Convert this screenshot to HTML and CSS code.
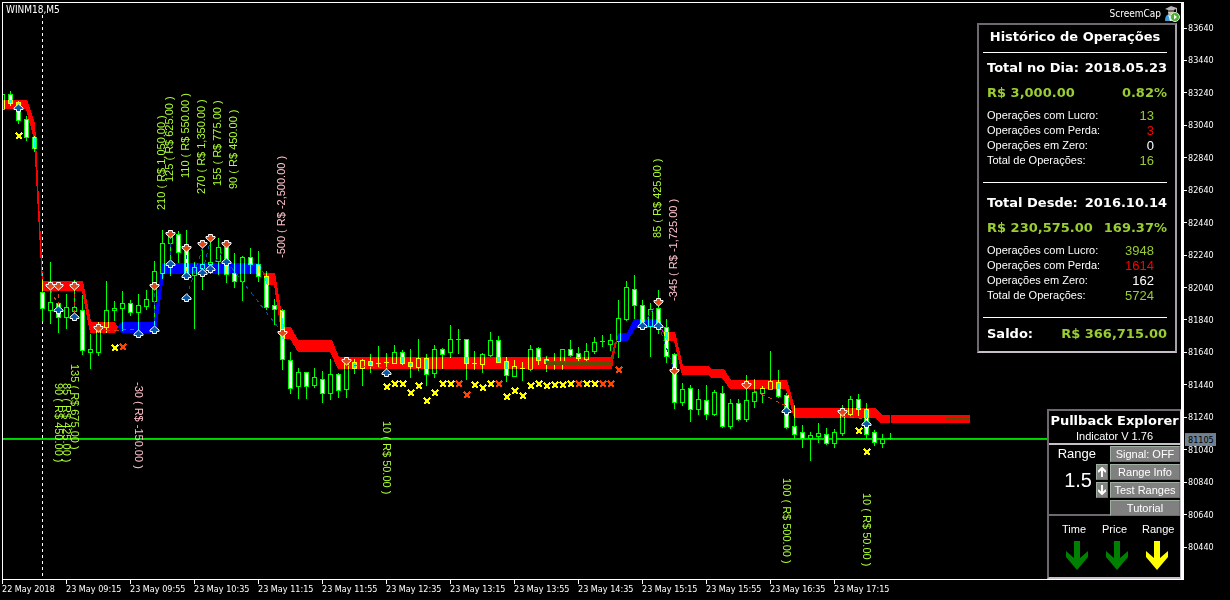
FILE: index.html
```html
<!DOCTYPE html>
<html lang="pt-BR">
<head>
<meta charset="utf-8">
<title>WINM18,M5</title>
<link rel="stylesheet" href="styles.css">
</head>
<body>
<div class="terminal">
  <main class="chart">
    <svg class="plot" id="plot" role="img" aria-label="WINM18 M5">
      <line class="day-line" x1="39.5" y1="12" x2="39.5" y2="100%"/>
      <rect class="price-line" x="0" y="435" width="100%" height="1"/>
      <rect class="price-shadow" x="0" y="436" width="100%" height="1"/>
      <g id="scene" transform="translate(-3 -3)">
        <g id="candles"></g>
        <g class="bands">
          <polygon class="red" points="3,100 27,100 35,123 37,160 43,281 83,281 91,322 115,322 118,327 115,333 90,333 82,291 42,291 42,285 34,140 26,109 3,109"/>
          <polygon class="blue" points="118,327 121,322 154,322 162,263 258,263 262,268 258,274 164,274 156,333 121,333"/>
          <polygon class="red" points="261,268 264,273 275,273 284,327 291,327 298,340 332,340 339,357 611,357 615,341 616,343 612,369 338,369 330,352 298,352 290,339 282,339 274,285 267,285"/>
          <polygon class="blue" points="616,343 618,333 627,333 634,319 660,319 663,331 659,328 635,328 628,341 618,341"/>
          <polygon class="red" points="661,329 664,332 675,332 683,366 708,366 712,369 724,369 731,380 787,380 795,408 875,408 882,415 890,415 890,423 881,423 875,418 794,418 786,389 730,389 722,378 712,378 708,375 682,375 674,341 667,341"/>
          <rect class="red" x="891" y="415" width="79" height="8"/>
        </g>
        <rect class="olive" x="546" y="361" width="65" height="4"/>
        <path class="olive-line" d="M611 363L618 336"/>
        <rect class="olive" x="946" y="418" width="24" height="2"/>
        <g id="trades"></g>
        <g id="marks"></g>
        <g id="labels"></g>
      </g>
    </svg>
    <h1 class="symbol">WINM18,M5</h1>
    <aside class="side">
      <div class="expert">
        <span>ScreemCap</span>
        <svg width="16" height="16" viewBox="0 0 16 16" aria-hidden="true">
          <path d="M1 15Q1 8 6 8Q11 8 12 15Z" fill="#3f9fe0"/>
          <path d="M4 8L7 11L8 15L6 15Z" fill="#eef6ff"/>
          <circle cx="7" cy="6" r="3" fill="#d8c8a8"/>
          <path d="M1 3L7 0L13 2L13 6L12 6L12 3L10 4L10 6L4 6L4 4Z" fill="#b4b4b4"/>
          <path d="M4 4L10 4L10 6L4 6Z" fill="#666"/>
          <circle cx="11" cy="11" r="4.500" fill="#4caf32" stroke="#d8f0d0" stroke-width="1"/>
          <path d="M10 8.500L13 11L10 13.500Z" fill="#fff"/>
        </svg>
      </div>
      <section class="history">
        <h2 class="history-title">Histórico de Operações</h2>
        <div class="block">
          <div class="pair"><span>Total no Dia:</span><span>2018.05.23</span></div>
          <div class="pair gain"><span>R$ 3,000.00</span><span>0.82%</span></div>
          <dl class="stats">
            <div><dt>Operações com Lucro:</dt><dd class="gain">13</dd></div>
            <div><dt>Operações com Perda:</dt><dd class="loss">3</dd></div>
            <div><dt>Operações em Zero:</dt><dd>0</dd></div>
            <div><dt>Total de Operações:</dt><dd class="gain">16</dd></div>
          </dl>
        </div>
        <div class="block">
          <div class="pair"><span>Total Desde:</span><span>2016.10.14</span></div>
          <div class="pair gain"><span>R$ 230,575.00</span><span>169.37%</span></div>
          <dl class="stats">
            <div><dt>Operações com Lucro:</dt><dd class="gain">3948</dd></div>
            <div><dt>Operações com Perda:</dt><dd class="loss">1614</dd></div>
            <div><dt>Operações em Zero:</dt><dd>162</dd></div>
            <div><dt>Total de Operações:</dt><dd class="gain">5724</dd></div>
          </dl>
        </div>
        <div class="pair balance"><span>Saldo:</span><span class="gain">R$ 366,715.00</span></div>
      </section>
      <section class="explorer">
        <header class="explorer-head">
          <h2>Pullback Explorer</h2>
          <p>Indicator V 1.76</p>
        </header>
        <div class="controls">
          <div class="range"><span>Range</span><output>1.5</output></div>
          <div class="spin">
            <button type="button" aria-label="Range up"><svg width="8" height="10" viewBox="0 0 8 10"><path d="M4 10V2M0 5L4 1L8 5"/></svg></button>
            <button type="button" aria-label="Range down"><svg width="8" height="10" viewBox="0 0 8 10"><path d="M4 0V8M0 5L4 9L8 5"/></svg></button>
          </div>
          <div class="actions">
            <button type="button">Signal: OFF</button>
            <button type="button">Range Info</button>
            <button type="button">Test Ranges</button>
            <button type="button">Tutorial</button>
          </div>
        </div>
        <div class="signals">
          <div><span>Time</span><svg class="go" width="22" height="29" viewBox="0 0 22 29"><path d="M8 0H14V17L22 10V16L11 29L0 16V10L8 17Z"/></svg></div>
          <div><span>Price</span><svg class="go" width="22" height="29" viewBox="0 0 22 29"><path d="M8 0H14V17L22 10V16L11 29L0 16V10L8 17Z"/></svg></div>
          <div><span>Range</span><svg class="wait" width="22" height="29" viewBox="0 0 22 29"><path d="M8 0H14V17L22 10V16L11 29L0 16V10L8 17Z"/></svg></div>
        </div>
      </section>
    </aside>
  </main>
  <div class="prices">
    <span>83640</span><span>83440</span><span>83240</span><span>83040</span><span>82840</span><span>82640</span><span>82440</span><span>82240</span><span>82040</span><span>81840</span><span>81640</span><span>81440</span><span>81240</span><span>81040</span><span>80840</span><span>80640</span><span>80440</span>
    <strong class="last-price">81105</strong>
  </div>
  <div class="times">
    <span>22 May 2018</span><span>23 May 09:15</span><span>23 May 09:55</span><span>23 May 10:35</span><span>23 May 11:15</span><span>23 May 11:55</span><span>23 May 12:35</span><span>23 May 13:15</span><span>23 May 13:55</span><span>23 May 14:35</span><span>23 May 15:15</span><span>23 May 15:55</span><span>23 May 16:35</span><span>23 May 17:15</span>
  </div>
</div>
<script src="chart.js"></script>
</body>
</html>
```

FILE: styles.css
```css
* { box-sizing: border-box; }
body {
  margin: 0;
  background: #000;
  color: #fff;
  font-family: "Liberation Sans", Arial, sans-serif;
  font-size: 11px;
}
h1, h2, p, dl, dd { margin: 0; font-weight: normal; }

.terminal {
  display: grid;
  grid-template-columns: 1fr 46px;
  grid-template-rows: 1fr 20px;
  height: 100vh;
  min-height: 600px;
  padding: 2px 0 0 2px;
}
.chart {
  position: relative;
  overflow: hidden;
  border: 1px solid #fff;
  border-right-width: 3px;
}
.symbol, .expert, .prices, .times {
  font-family: "DejaVu Sans Condensed", "DejaVu Sans", sans-serif;
  font-size: 10px;
  line-height: 12px;
}
.prices, .times { font-size: 9px; }
.symbol { position: absolute; left: 3px; top: 1px; }

/* plot */
.plot { position: absolute; left: 0; top: 0; width: 100%; height: 100%; shape-rendering: crispEdges; }
.day-line { stroke: #fff; stroke-dasharray: 3 3; }
.price-line { fill: #00d800; }
.price-shadow { fill: #4c8c6c; }
.candle { fill: #000; stroke: #0f0; }
.candle.full { fill: #fff; }
.wick { fill: #0f0; }
.bands > * { mix-blend-mode: difference; }
.red { fill: #f00; }
.blue { fill: #00f; }
.olive { fill: #5c5000; }
.olive-line { stroke: #5c5000; stroke-width: 1; fill: none; }
.trade { fill: none; stroke-dasharray: 4 4; }
.trade.buy { stroke: #0850a0; }
.trade.sell { stroke: #d04010; }
.arrow { stroke: #fff; stroke-width: 1; shape-rendering: auto; }
.arrow.buy { fill: #0858a8; }
.arrow.sell { fill: #e04818; }
.cross { stroke-width: 2; fill: none; }
.cross.hit { stroke: #ff0; }
.cross.miss { stroke: #ff4500; }
.profit, .deficit { font-size: 11px; }
.profit { fill: #adff2f; }
.deficit { fill: #ffc0cb; }

/* overlays on the right of the plot */
.side {
  position: absolute;
  inset: 0 0 0 auto;
  display: flex;
  flex-direction: column;
  align-items: flex-end;
}
.expert { display: flex; align-items: center; gap: 3px; height: 20px; padding: 2px 1px 0 0; }
.gain { color: #9acd32; }
.loss { color: #f00; }

.history {
  width: 200px;
  margin-right: 4px;
  padding: 0 8px 0 4px;
  background: #000;
  border: 2px solid;
  border-color: #706870 #a8a0a8 #c8c0c8 #706870;
}
.history-title, .pair, .explorer h2 {
  font-family: "DejaVu Sans", Verdana, sans-serif;
  font-weight: bold;
  font-size: 13px;
  line-height: 16px;
  white-space: nowrap;
}
.history-title { padding: 4px 0 7px; text-align: center; }
.block { border-top: 1px solid #fff; padding: 7px 0 14px; }
.pair { display: flex; justify-content: space-between; padding-left: 4px; }
.pair + .pair { margin-top: 9px; }
.stats { padding: 7px 13px 0 4px; line-height: 15px; }
.stats dd { font-size: 13px; }
.block + .block { padding-top: 12px; }
.stats > div { display: flex; justify-content: space-between; height: 15px; }
.balance { border-top: 1px solid #fff; padding-top: 8px; padding-bottom: 9px; }

.explorer {
  width: 134px;
  margin-top: auto;
  background: #000;
  border: 2px solid;
  border-color: #706870 #c8c0c8 #c8c0c8 #706870;
  border-right-width: 1px;
}
.explorer-head { height: 34px; padding-top: 2px; text-align: center; border-bottom: 2px solid #c8c0c8; }
.explorer-head p { line-height: 14px; }
.controls { display: flex; height: 71px; border-bottom: 2px solid #706870; }
.range { flex: 1; display: flex; flex-direction: column; align-items: flex-end; }
.range span { font-size: 13px; line-height: 18px; }
.range output { font-size: 20px; line-height: 34px; padding-right: 4px; }
.spin { width: 12px; padding-top: 19px; display: grid; gap: 2px; align-content: start; }
.actions { width: 70px; margin-left: 2px; padding-top: 1px; display: grid; gap: 2px; align-content: start; }
button {
  height: 16px;
  padding: 0;
  border: 1px solid;
  border-color: #a0b0a0 #706870 #706870 #a0b0a0;
  background: #808080;
  color: #fff;
  font: 11px/14px "Liberation Sans", Arial, sans-serif;
}
button svg { display: block; margin: auto; }
button path { fill: none; stroke: #fff; stroke-width: 2; }
.signals { display: grid; grid-template-columns: repeat(3, 40px); padding: 6px 0 7px 13px; }
.signals span { display: block; line-height: 14px; }
.signals svg { display: block; margin: 5px 0 0 4px; }
.go { fill: #008000; }
.wait { fill: #ff0; }

/* axes */
.prices { position: relative; display: flex; flex-direction: column; justify-content: space-between; padding: 20px 0 27px; }
.prices span { display: flex; align-items: center; gap: 1px; }
.prices span::before { content: ""; width: 3px; height: 1px; background: #fff; }
.last-price {
  position: absolute;
  left: 1px;
  top: 431px;
  width: 31px;
  padding-left: 3px;
  background: #708090;
  border-top: 1px solid #00c800;
  color: #000;
  font-weight: normal;
}
.times { display: flex; grid-column: 1 / -1; }
.times span { width: 64px; flex: none; padding-top: 3px; white-space: nowrap; position: relative; }
.times span::before { content: ""; position: absolute; left: 0; top: 0; width: 1px; height: 4px; background: #fff; }
```

FILE: chart.js
```js
// Bars are 8px apart. Each row: high, body top, body bottom, low, filled.
const bars = [
  [94,94,109,109,0],[91,94,103,105,1],[101,102,120,123,1],[116,119,137,140,1],[136,137,148,151,1],
  [280,292,308,320,1],[262,302,310,323,0],[302,303,317,332,1],[294,307,317,328,0],[280,307,311,313,0],
  [295,310,350,354,1],[334,349,352,368,0],[322,328,352,355,0],[281,310,327,332,0],[301,308,310,320,0],
  [291,303,308,330,0],[300,303,312,315,1],[294,305,312,330,0],[290,299,306,309,0],[261,271,301,327,0],
  [230,243,273,278,0],[232,234,243,275,0],[231,234,252,262,1],[230,248,275,277,1],[262,267,275,328,0],
  [245,264,268,289,0],[237,262,264,273,0],[238,247,261,274,0],[243,247,274,282,1],[253,273,281,287,1],
  [256,257,281,300,0],[248,257,264,273,1],[251,264,276,281,1],[271,276,307,309,1],[299,305,309,324,1],
  [309,310,359,369,1],[352,360,388,393,1],[368,372,386,398,0],[372,372,386,398,1],[368,377,385,387,0],
  [371,379,393,402,1],[359,374,393,399,0],[373,374,390,397,1],[358,363,389,397,0],[359,362,368,373,1],
  [359,360,368,385,0],[354,361,365,372,1],[346,363,364,366,0],[353,362,363,370,0],[345,352,363,363,0],
  [350,352,363,364,1],[349,362,366,377,1],[339,358,367,370,0],[354,358,374,385,1],[345,349,373,377,0],
  [348,349,354,368,1],[325,339,352,357,0],[329,339,340,353,0],[339,339,363,379,1],[351,363,364,369,0],
  [353,354,364,372,0],[332,340,355,356,0],[336,340,362,362,1],[357,361,375,381,1],[360,366,376,376,0],
  [362,368,369,380,0],[345,349,369,370,0],[347,348,360,364,1],[356,359,363,371,1],[353,363,364,369,0],
  [349,349,364,369,0],[340,349,355,356,1],[347,353,358,363,1],[343,351,359,363,0],[337,342,351,353,0],
  [335,341,342,346,0],[334,340,344,350,0],[300,318,341,357,0],[281,287,319,320,0],[275,289,305,318,1],
  [300,305,323,327,1],[303,309,326,356,0],[290,308,325,333,1],[319,327,356,362,1],[353,354,402,408,1],
  [383,389,402,405,0],[385,388,409,421,1],[389,399,409,414,0],[385,400,414,419,1],[390,392,414,415,0],
  [386,393,426,427,1],[399,403,426,428,0],[399,403,419,420,1],[375,400,419,421,0],[379,392,401,407,0],
  [386,388,393,402,0],[351,381,389,389,0],[370,382,396,397,1],[393,395,427,428,1],[405,426,434,438,1],
  [425,432,438,447,1],[432,435,438,460,0],[423,433,436,442,0],[428,434,443,444,1],[429,432,443,447,0],
  [405,412,433,435,0],[396,399,414,417,0],[394,399,409,415,1],[403,409,434,438,1],[430,432,442,445,1],
  [434,439,443,447,0],[433,438,439,439,0]
];

const down = [[50,286],[58,286],[74,286],[98,328],[154,286],[170,234],[186,248],[202,244],[210,238],
  [226,244],[282,333],[346,361],[658,302],[674,371],[746,385],[842,412]];
const up = [[18,107],[58,309],[74,316],[138,333],[154,329],[170,263],[186,275],[186,297],[202,272],
  [210,268],[226,261],[386,372],[642,325],[658,325],[786,410],[866,423]];

const trades = [
  ["sell",50,290,58,305],["sell",58,286,58,309],["sell",74,286,74,316],["sell",98,331,138,329],
  ["buy",154,329,154,286],["buy",170,263,170,234],["buy",186,275,186,248],["buy",186,297,202,248],
  ["buy",202,272,210,240],["buy",210,268,226,246],["buy",226,261,282,333],["sell",346,365,386,368],
  ["buy",642,325,658,302],["buy",658,325,674,371],["sell",746,387,786,406],["sell",842,416,866,419]
];

const hits = [[19,136],[115,348],[387,387],[395,384],[403,384],[411,393],[419,386],[427,401],[435,393],
  [443,384],[451,384],[475,385],[483,388],[491,384],[507,397],[515,391],[523,396],[531,386],[539,384],
  [547,386],[555,385],[563,385],[571,384],[587,384],[595,384],[859,431],[867,452]];
const misses = [[123,347],[459,384],[467,395],[499,384],[579,384],[603,384],[611,384],[619,370]];

const labels = [
  ["210 ( R$ 1,050.00 )",165,210,-90],["125 ( R$ 625.00 )",173,182,-90],["110 ( R$ 550.00 )",189,178,-90],
  ["270 ( R$ 1,350.00 )",205,194,-90],["155 ( R$ 775.00 )",221,186,-90],["90 ( R$ 450.00 )",237,189,-90],
  ["-500 ( R$ -2,500.00 )",285,258,-90],["85 ( R$ 425.00 )",661,238,-90],["-345 ( R$ -1,725.00 )",677,301,-90],
  ["90 ( R$ 450.00 )",55,383,90],["85 ( R$ 425.00 )",63,383,90],["135 ( R$ 675.00 )",71,364,90],
  ["-30 ( R$ -150.00 )",135,382,90],["10 ( R$ 50.00 )",383,421,90],["100 ( R$ 500.00 )",783,478,90],
  ["10 ( R$ 50.00 )",863,493,90]
];

function add(group, tag, attrs, text) {
  const node = document.createElementNS("http://www.w3.org/2000/svg", tag);
  for (const key in attrs) node.setAttribute(key, attrs[key]);
  if (text) node.textContent = text;
  document.getElementById(group).appendChild(node);
}

bars.forEach(([high, top, bottom, low, full], i) => {
  const x = 2 + i * 8;
  add("candles", "rect", { class: "wick", x, y: high, width: 1, height: low - high + 1 });
  if (bottom - top < 2) {
    add("candles", "rect", { class: "wick", x: x - 2, y: top, width: 5, height: 1 });
  } else {
    add("candles", "rect", { class: full ? "candle full" : "candle", x: x - 1.5, y: top + 0.5, width: 4, height: bottom - top });
  }
});

trades.forEach(([side, x1, y1, x2, y2]) =>
  add("trades", "path", { class: "trade " + side, d: `M${x1 + 0.5} ${y1}L${x2 + 0.5} ${y2}` }));

const head = "M-2 -3.500H2V-1.500H4.500V0L0 4L-4.500 0V-1.500H-2Z";
down.forEach(([x, y]) => add("marks", "path", { class: "arrow sell", d: head, transform: `translate(${x + 0.5} ${y})` }));
up.forEach(([x, y]) => add("marks", "path", { class: "arrow buy", d: head, transform: `translate(${x + 0.5} ${y + 1}) rotate(180)` }));

const crossPath = (x, y) => `M${x - 3} ${y - 3}L${x + 3} ${y + 3}M${x + 3} ${y - 3}L${x - 3} ${y + 3}`;
hits.forEach(([x, y]) => add("marks", "path", { class: "cross hit", d: crossPath(x, y) }));
misses.forEach(([x, y]) => add("marks", "path", { class: "cross miss", d: crossPath(x, y) }));

labels.forEach(([text, x, y, angle]) =>
  add("labels", "text", { class: text[0] === "-" ? "deficit" : "profit", transform: `translate(${x} ${y}) rotate(${angle})` }, text));
```
